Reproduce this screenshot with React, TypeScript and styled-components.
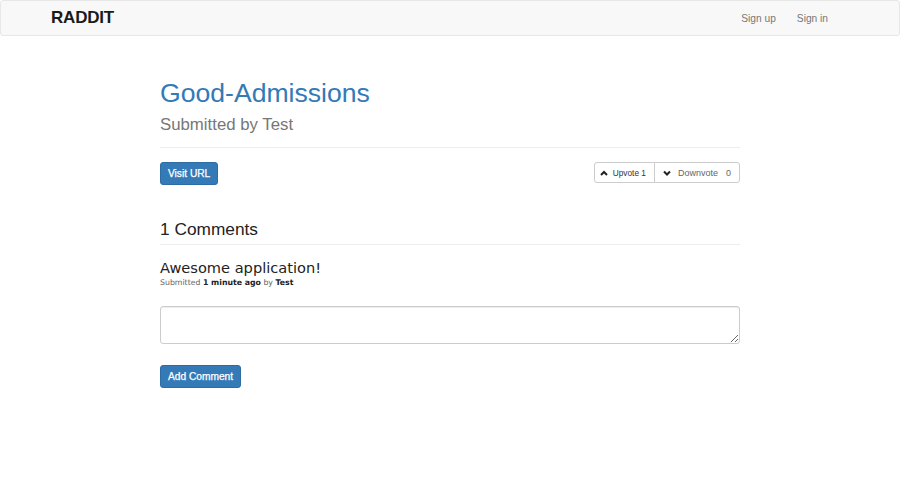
import React from "react";
import styled, { createGlobalStyle } from "styled-components";

const Global = createGlobalStyle`
  html, body { margin: 0; padding: 0; background: #fff; }
  body { font-family: "Liberation Sans", Arial, sans-serif; color: #333; }
  * { box-sizing: border-box; }
`;

const Navbar = styled.nav`
  height: 36px;
  background: #f8f8f8;
  border: 1px solid #e7e7e7;
  border-radius: 3px;
  display: flex;
  align-items: center;
  justify-content: space-between;
  padding: 0 71px 0 50px;
`;

const Brand = styled.a`
  font-size: 17px;
  font-weight: 700;
  color: #1a1a1a;
  letter-spacing: -0.2px;
  text-decoration: none;
`;

const NavLinks = styled.div`
  display: flex;
  gap: 21px;
`;

const NavLink = styled.a`
  font-size: 10.2px;
  color: #777;
  text-decoration: none;
`;

const Container = styled.main`
  width: 580px;
  margin: 0 auto;
  padding-top: 42px;
`;

const PageHeader = styled.header`
  border-bottom: 1px solid #eee;
  padding-bottom: 12px;
`;

const Title = styled.h1`
  margin: 0;
  font-size: 26.6px;
  line-height: 30px;
  font-weight: 400;
  color: #337ab7;
`;

const Subtitle = styled.div`
  font-size: 16.8px;
  line-height: 20px;
  color: #777;
  margin-top: 7px;
`;

const Actions = styled.div`
  display: flex;
  justify-content: space-between;
  align-items: flex-start;
  margin-top: 14px;
`;

const PrimaryButton = styled.button`
  font-family: "Liberation Sans", Arial, sans-serif;
  font-size: 10.2px;
  line-height: 14px;
  color: #fff;
  background: #337ab7;
  border: 1px solid #2e6da4;
  border-radius: 3px;
  padding: 4px 7px;
  height: 23px;
  cursor: pointer;
  -webkit-text-stroke: 0.25px #fff;
`;

const VoteGroup = styled.div`
  display: flex;
`;

const VoteButton = styled.button<{ $first?: boolean; $muted?: boolean }>`
  font-family: "Liberation Sans", Arial, sans-serif;
  font-size: ${(p) => (p.$muted ? "9px" : "8.3px")};
  color: ${(p) => (p.$muted ? "#666" : "#333")};
  background: #fff;
  border: 1px solid #ccc;
  border-radius: ${(p) => (p.$first ? "3px 0 0 3px" : "0 3px 3px 0")};
  margin-left: ${(p) => (p.$first ? "0" : "-1px")};
  height: 21px;
  padding: 0 ${(p) => (p.$muted ? "8px" : "8px")} 0 ${(p) => (p.$muted ? "8px" : "5px")};
  display: flex;
  align-items: center;
  gap: ${(p) => (p.$muted ? "7px" : "5px")};
`;

const Count = styled.span`
  margin-left: 8px;
`;

const Chevron = ({ up }: { up?: boolean }) => (
  <svg width="8" height="6" viewBox="0 0 8 6">
    <path
      d={up ? "M1 5 L4 2 L7 5" : "M1 1.5 L4 4.5 L7 1.5"}
      fill="none"
      stroke="#222"
      strokeWidth="2"
    />
  </svg>
);

const SectionTitle = styled.h3`
  margin: 33px 0 0;
  font-size: 17.3px;
  line-height: 22px;
  font-weight: 400;
  color: #222;
  padding-bottom: 4px;
  border-bottom: 1px solid #eee;
`;

const Comment = styled.article`
  margin-top: 14px;
`;

const CommentText = styled.div`
  font-family: "DejaVu Sans", Verdana, sans-serif;
  font-size: 14.6px;
  line-height: 17px;
  color: #222;
`;

const Meta = styled.div`
  font-family: "DejaVu Sans", Verdana, sans-serif;
  font-size: 7.8px;
  line-height: 10px;
  color: #666;
  margin-top: 2px;
  b { color: #222; }
`;

const TextArea = styled.textarea`
  display: block;
  width: 580px;
  height: 38px;
  margin-top: 18px;
  border: 1px solid #ccc;
  border-radius: 3px;
  box-shadow: inset 0 1px 1px rgba(0, 0, 0, 0.075);
  font-family: "Liberation Sans", Arial, sans-serif;
  font-size: 10px;
  padding: 4px 8px;
  resize: vertical;
`;

const SubmitRow = styled.div`
  margin-top: 21px;
`;

export default function App() {
  return (
    <>
      <Global />
      <Navbar>
        <Brand href="#">RADDIT</Brand>
        <NavLinks>
          <NavLink href="#">Sign up</NavLink>
          <NavLink href="#">Sign in</NavLink>
        </NavLinks>
      </Navbar>
      <Container>
        <PageHeader>
          <Title>Good-Admissions</Title>
          <Subtitle>Submitted by Test</Subtitle>
        </PageHeader>
        <Actions>
          <PrimaryButton>Visit URL</PrimaryButton>
          <VoteGroup>
            <VoteButton $first>
              <Chevron up />
              <span>Upvote 1</span>
            </VoteButton>
            <VoteButton $muted>
              <Chevron />
              <span>
                Downvote<Count>0</Count>
              </span>
            </VoteButton>
          </VoteGroup>
        </Actions>
        <SectionTitle>1 Comments</SectionTitle>
        <Comment>
          <CommentText>Awesome application!</CommentText>
          <Meta>
            Submitted <b>1 minute ago</b> by <b>Test</b>
          </Meta>
        </Comment>
        <TextArea />
        <SubmitRow>
          <PrimaryButton>Add Comment</PrimaryButton>
        </SubmitRow>
      </Container>
    </>
  );
}
